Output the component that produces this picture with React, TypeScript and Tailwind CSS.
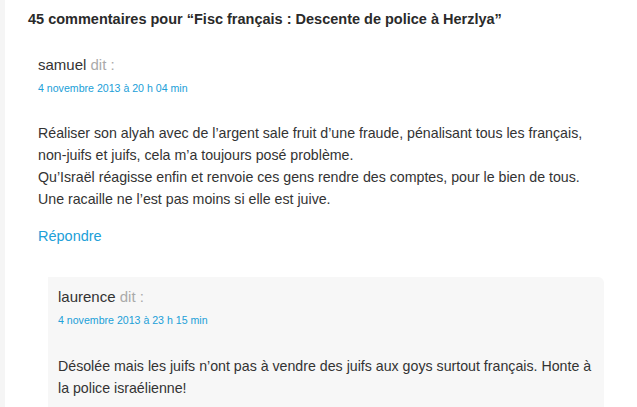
import React from 'react';

const font = { fontFamily: '"Liberation Sans", Arial, sans-serif' };

const App: React.FC = () => {
  return (
    <div className="flex min-h-[407px] bg-white text-[#333]" style={font}>
      <div className="w-[5px] shrink-0 bg-[#f5f5f5]" />
      <div className="flex-1 overflow-hidden">
        <h2 className="ml-[23px] mt-[11px] text-[14.5px] font-bold leading-[17px] text-[#2a2a2a]">
          45 commentaires pour “Fisc français : Descente de police à Herzlya”
        </h2>

        <div className="ml-[33px] mt-[28px]">
          <div className="text-[15px] leading-[18px]">
            samuel <span className="text-[#aaa]">dit :</span>
          </div>
          <div className="mt-[8px] text-[10.6px] leading-[13px] text-[#21a0d8]">4 novembre 2013 à 20 h 04 min</div>
          <p className="mt-[27px] text-[14.2px] leading-[22px] text-[#333]">
            Réaliser son alyah avec de l’argent sale fruit d’une fraude, pénalisant tous les français,
            <br />
            non-juifs et juifs, cela m’a toujours posé problème.
            <br />
            Qu’Israël réagisse enfin et renvoie ces gens rendre des comptes, pour le bien de tous.
            <br />
            Une racaille ne l’est pas moins si elle est juive.
          </p>
          <div className="mt-[17px] text-[14.5px] leading-[18px] text-[#21a0d8]">Répondre</div>
        </div>

        <div className="ml-[43px] mr-[33px] mt-[32px] rounded-tr-[6px] bg-[#f7f7f7] px-[10px] pt-[11px] pb-[20px]">
          <div className="text-[15px] leading-[18px]">
            laurence <span className="text-[#aaa]">dit :</span>
          </div>
          <div className="mt-[8px] text-[10.6px] leading-[13px] text-[#21a0d8]">4 novembre 2013 à 23 h 15 min</div>
          <p className="mt-[28px] text-[14.2px] leading-[22px] text-[#333]">
            Désolée mais les juifs n’ont pas à vendre des juifs aux goys surtout français. Honte à
            <br />
            la police israélienne!
          </p>
        </div>
      </div>
    </div>
  );
};

export default App;
